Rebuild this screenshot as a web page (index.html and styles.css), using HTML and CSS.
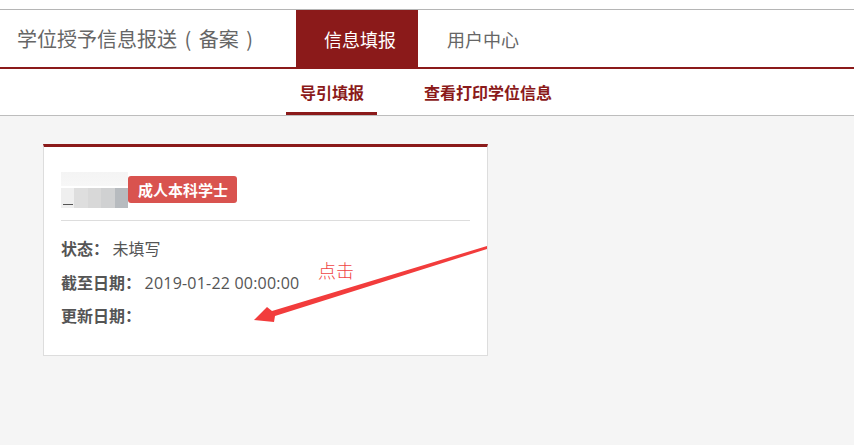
FILE: index.html
```html
<!DOCTYPE html>
<html lang="zh-CN">
<head>
<meta charset="utf-8">
<title>学位授予信息报送（备案）</title>
<link rel="stylesheet" href="styles.css">
</head>
<body>
<div class="page">
  <header class="topbar">
    <div class="brand">学位授予信息报送 ( 备案 )</div>
    <nav class="mainnav">
      <a class="tab active">信息填报</a>
      <a class="tab">用户中心</a>
    </nav>
  </header>
  <nav class="subnav">
    <a class="subtab current">导引填报</a>
    <a class="subtab">查看打印学位信息</a>
  </nav>
  <main class="content">
    <section class="card">
      <div class="card-head">
        <div class="blurname"><span class="b1"></span><span class="b2"></span><span class="b3"></span><span class="b4"></span><span class="b5"></span><i class="dash"></i></div>
        <span class="badge">成人本科学士</span>
      </div>
      <div class="card-body">
        <p class="row"><b>状态：</b> 未填写</p>
        <p class="row"><b>截至日期：</b> <span class="num">2019-01-22 00:00:00</span></p>
        <p class="row"><b>更新日期：</b></p>
      </div>
    </section>
  </main>
  <span class="note">点击</span>
  <svg class="arrow" width="854" height="445" viewBox="0 0 854 445">
    <polygon points="487,246 487,249 275,316 274,322 254,320 267,307 272,311" fill="#f23c3c"/>
  </svg>
</div>
</body>
</html>
```
FILE: styles.css
```css
* { box-sizing: border-box; }
html, body { margin: 0; padding: 0; }
body {
  font-family: "Noto Sans CJK SC", "Open Sans", sans-serif;
  background: #f5f5f5;
  width: 854px;
  height: 445px;
  overflow: hidden;
}
.page {
  position: relative;
  min-height: 445px;
  padding-top: 9px;
  background: #fff;
}
.topbar {
  display: flex;
  align-items: stretch;
  height: 60px;
  border-top: 1px solid #b5b5b5;
  border-bottom: 2px solid #8b1a1a;
  background: #fff;
}
.brand {
  font-size: 20px;
  color: #666;
  padding-left: 17px;
  width: 296px;
  display: flex;
  align-items: center;
  white-space: pre;
  word-spacing: 3px;
}
.mainnav { display: flex; }
.tab {
  display: flex;
  align-items: center;
  justify-content: flex-start;
  padding-left: 28px;
  width: 122px;
  height: 57px;
  font-size: 18px;
  color: #666;
}
.tab.active { background: #8b1a1a; color: #fff; }
.tab + .tab { width: 130px; padding-left: 29px; }
.subnav {
  display: flex;
  height: 47px;
  padding-left: 286px;
  border-bottom: 1px solid #bdbdbd;
  background: #fff;
}
.subtab {
  display: flex;
  align-items: center;
  font-size: 16px;
  font-weight: bold;
  color: #8b1a1a;
  padding: 2px 13px 0 14px;
  border-bottom: 3px solid transparent;
}
.subtab.current { border-bottom-color: #8b1a1a; }
.subtab + .subtab { margin-left: 33px; padding-left: 14px; }
.content {
  background: #f5f5f5;
  padding: 28px 0 0 43px;
  height: 329px;
}
.card {
  width: 445px;
  height: 212px;
  background: #fff;
  border: 1px solid #ddd;
  border-top: 3px solid #8b1a1a;
  padding: 0 17px;
}
.card-head {
  display: flex;
  align-items: center;
  height: 74px;
  border-bottom: 1px solid #ddd;
  padding-top: 10px;
}
.blurname {
  position: relative;
  display: flex;
  align-items: flex-end;
  width: 67px;
  height: 36px;
  margin-top: 2px;
  background: linear-gradient(#f4f4f4, #f7f7f7 40%, transparent 40%);
}
.blurname span { height: 20px; flex: 1; }
.b1 { background: #efefef; }
.b2 { background: #dedede; }
.b3 { background: #d8d8d8; }
.b4 { background: #d0d1d2; }
.b5 { background: #b7bbbf; }
.dash {
  position: absolute;
  left: 2px;
  bottom: 3px;
  width: 10px;
  height: 1px;
  background: #555;
}
.badge {
  display: inline-block;
  background: #d9534f;
  color: #fff;
  font-size: 15px;
  font-weight: bold;
  border-radius: 3px;
  padding: 0 9px 0 10px;
  height: 27px;
  line-height: 27px;
  margin-top: 2px;
}
.card-body { padding-top: 13px; }
.row {
  margin: 0;
  height: 33.5px;
  line-height: 28px;
  font-size: 16px;
  color: #555;
}
.row b { color: #555; }
.num { font-family: "Open Sans", sans-serif; letter-spacing: 0.2px; }
.note {
  position: absolute;
  left: 318px;
  top: 257px;
  font-size: 18px;
  color: #ef4444;
  font-weight: 300;
}
.arrow {
  position: absolute;
  left: 0;
  top: 0;
  pointer-events: none;
}
```
